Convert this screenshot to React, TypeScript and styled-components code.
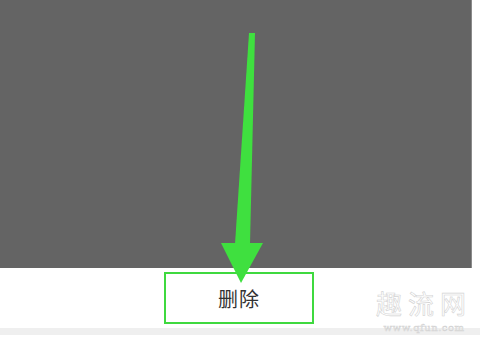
import React from 'react';
import styled, { createGlobalStyle } from 'styled-components';

const GlobalStyle = createGlobalStyle`
  html, body {
    margin: 0;
    padding: 0;
    background: #ffffff;
    font-family: "Noto Sans CJK SC", "Noto Sans", sans-serif;
  }
`;

const Page = styled.div`
  position: relative;
  width: 480px;
  height: 346px;
  overflow: hidden;
  background: #ffffff;
`;

const Screen = styled.div`
  width: 472px;
  height: 268px;
  background: #646464;
  border-right: 1px solid #8a8a8a;
  box-sizing: border-box;
`;

const Sheet = styled.div`
  display: flex;
  flex-direction: column;
`;

const ButtonRow = styled.div`
  display: flex;
  padding: 4px 0 0 164px;
`;

const DeleteButton = styled.div`
  width: 150px;
  height: 52px;
  box-sizing: border-box;
  border: 2px solid #3fd93f;
  display: flex;
  align-items: center;
  justify-content: center;
  font-size: 20px;
  color: #333333;
  letter-spacing: 1px;
`;

const Band = styled.div`
  margin-top: 4px;
  height: 7px;
  background: #efefef;
`;

const Arrow = styled.svg`
  position: absolute;
  left: 0;
  top: 0;
  pointer-events: none;
`;

const Watermark = styled.div`
  position: absolute;
  right: 8px;
  top: 287px;
  display: flex;
  flex-direction: column;
  align-items: center;
  gap: 3px;
  color: #ffffff;
  -webkit-text-stroke: 0.6px #d4d4d4;
`;

const MarkTitle = styled.span`
  font-size: 26px;
  line-height: 32px;
  letter-spacing: 6px;
`;

const MarkUrl = styled.span`
  font-family: "DejaVu Serif", serif;
  font-size: 10px;
  line-height: 12px;
  letter-spacing: 0.5px;
`;

export default function App() {
  return (
    <Page>
      <GlobalStyle />
      <Screen />
      <Sheet>
        <ButtonRow>
          <DeleteButton>删除</DeleteButton>
        </ButtonRow>
        <Band />
      </Sheet>
      <Watermark>
        <MarkTitle>趣流网</MarkTitle>
        <MarkUrl>www.qfun.com</MarkUrl>
      </Watermark>
      <Arrow width="480" height="346" viewBox="0 0 480 346">
        <polygon points="249,33 255,33 250,244 235,244" fill="#3fe03f" />
        <polygon points="221,243 263,243 241,283" fill="#3fe03f" />
      </Arrow>
    </Page>
  );
}
